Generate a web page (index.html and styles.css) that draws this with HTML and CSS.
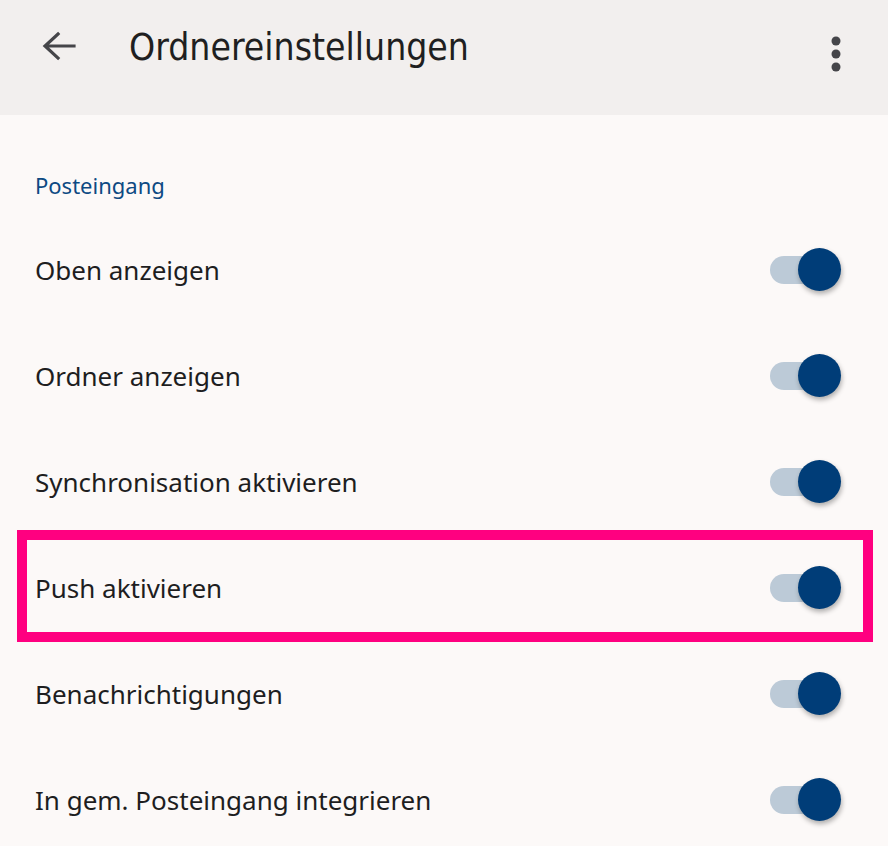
FILE: index.html
```html
<!DOCTYPE html>
<html lang="de">
<head>
    <meta charset="UTF-8">
    <title>Ordnereinstellungen</title>
    <link rel="stylesheet" href="styles.css">
</head>
<body>

<header class="app_bar">
    <button class="icon_btn back_btn" aria-label="Zurück">
        <svg width="36" height="36" viewBox="0 0 36 36">
            <path d="M34 16H6.5 M18 4 L5 16 L18 28" fill="none" stroke="#454549" stroke-width="3.2" stroke-linecap="square"/>
        </svg>
    </button>
    <h1 class="app_title">Ordnereinstellungen</h1>
    <button class="icon_btn menu_btn" aria-label="Mehr">
        <svg width="12" height="40" viewBox="0 0 12 40">
            <circle cx="6" cy="7" r="4.5" fill="#454549"/>
            <circle cx="6" cy="20" r="4.5" fill="#454549"/>
            <circle cx="6" cy="33" r="4.5" fill="#454549"/>
        </svg>
    </button>
</header>

<main class="settings">
    <h2 class="section_title">Posteingang</h2>

    <div class="setting_row">
        <span class="setting_label">Oben anzeigen</span>
        <span class="switch on"><span class="knob"></span></span>
    </div>
    <div class="setting_row">
        <span class="setting_label">Ordner anzeigen</span>
        <span class="switch on"><span class="knob"></span></span>
    </div>
    <div class="setting_row">
        <span class="setting_label">Synchronisation aktivieren</span>
        <span class="switch on"><span class="knob"></span></span>
    </div>
    <div class="setting_row highlighted">
        <span class="setting_label">Push aktivieren</span>
        <span class="switch on"><span class="knob"></span></span>
    </div>
    <div class="setting_row">
        <span class="setting_label">Benachrichtigungen</span>
        <span class="switch on"><span class="knob"></span></span>
    </div>
    <div class="setting_row">
        <span class="setting_label">In gem. Posteingang integrieren</span>
        <span class="switch on"><span class="knob"></span></span>
    </div>
</main>

</body>
</html>
```

FILE: styles.css
```css
html, body {
    margin: 0;
    padding: 0;
}

body {
    background-color: #fcf9f8;
    font-family: "Noto Sans", sans-serif;
    color: #1e1e1f;
    overflow: hidden;
}

.app_bar {
    display: flex;
    align-items: center;
    height: 115px;
    padding: 0 0 20px 0;
    box-sizing: border-box;
    background-color: #f2efee;
}

.icon_btn {
    border: none;
    background: none;
    padding: 0;
    display: flex;
    align-items: center;
    justify-content: center;
}

.back_btn {
    margin-left: 40px;
    width: 36px;
    height: 36px;
}

.app_title {
    flex: 1;
    margin: 0 0 0 53px;
    font-family: "Liberation Sans Narrow", "DejaVu Sans Condensed", sans-serif;
    font-weight: normal;
    font-size: 37px;
    color: #1f1f21;
}

.menu_btn {
    width: 12px;
    height: 40px;
    margin-right: 46px;
    margin-top: 12px;
}

.section_title {
    margin: 0;
    padding: 55px 35px 17px;
    font-size: 22px;
    line-height: 30px;
    font-weight: normal;
    color: #0d4a83;
}

.setting_row {
    position: relative;
    display: flex;
    align-items: center;
    justify-content: space-between;
    height: 106px;
    padding: 0 48px 0 35px;
}

.setting_label {
    font-size: 26px;
}

.highlighted::after {
    content: "";
    position: absolute;
    left: 17px;
    right: 15px;
    top: -5px;
    bottom: -1px;
    border: 10px solid #ff0080;
}

.switch {
    position: relative;
    display: block;
    width: 70px;
    height: 28px;
    border-radius: 14px;
    background-color: #bccad7;
}

.switch .knob {
    position: absolute;
    right: -1px;
    top: -8px;
    width: 43px;
    height: 43px;
    border-radius: 50%;
    background-color: #003d78;
    box-shadow: 1px 3px 5px rgba(0, 0, 0, 0.3);
}
```
